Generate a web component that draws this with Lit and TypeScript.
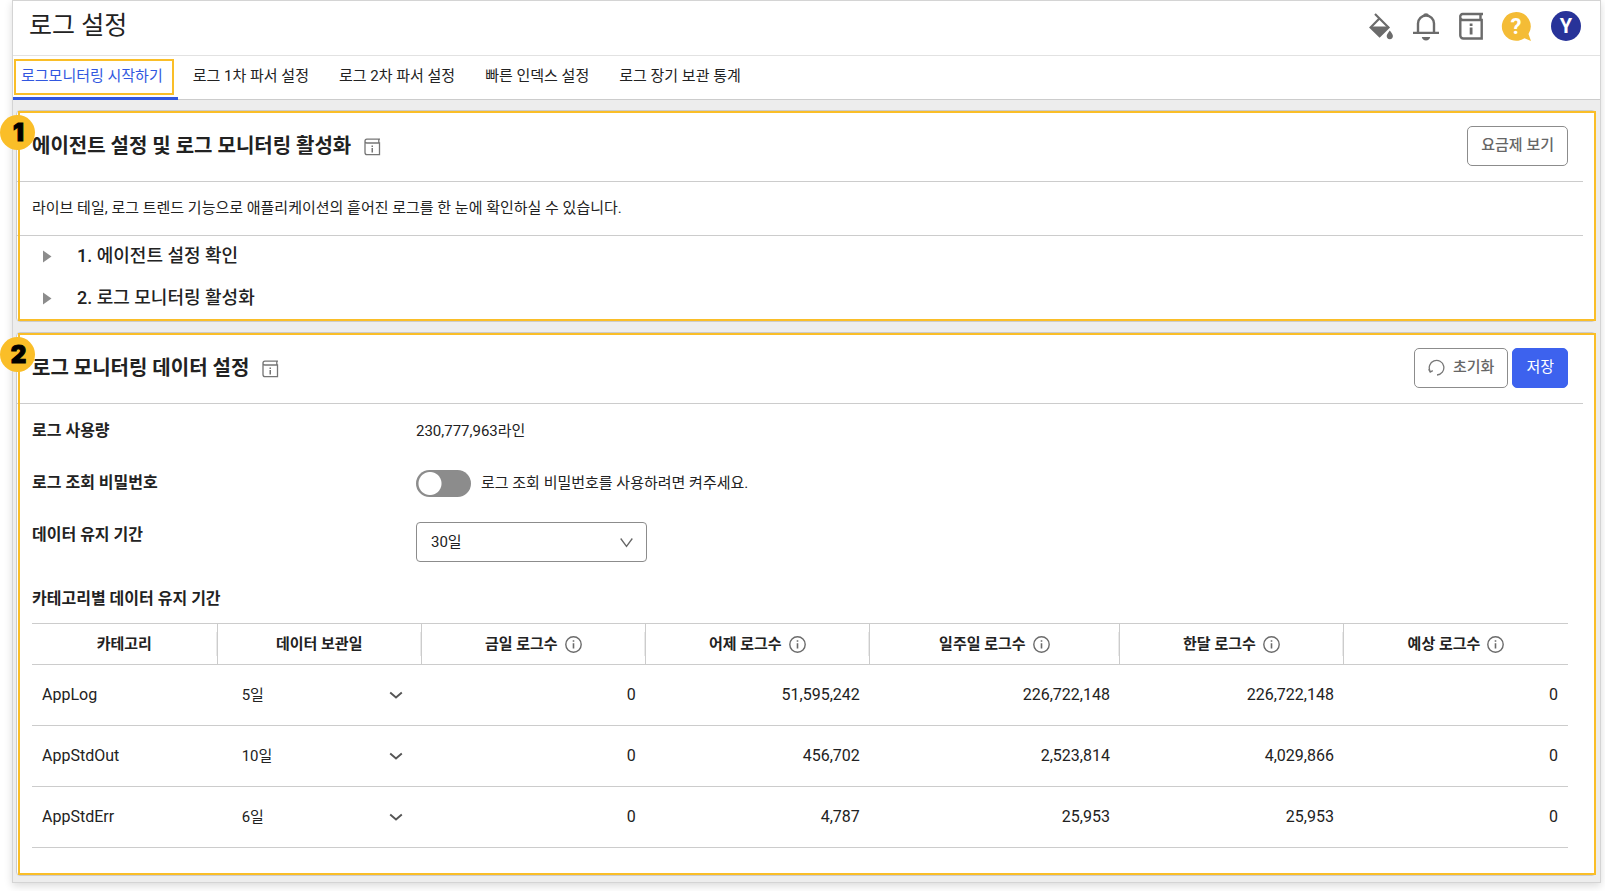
import { LitElement, html, css } from "lit";
import { customElement, state } from "lit/decorators.js";

interface CategoryRow {
  name: string;
  keep: string;
  counts: string[];
}

const TABS = [
  "로그모니터링 시작하기",
  "로그 1차 파서 설정",
  "로그 2차 파서 설정",
  "빠른 인덱스 설정",
  "로그 장기 보관 통계",
];

const COUNT_COLUMNS = ["금일 로그수", "어제 로그수", "일주일 로그수", "한달 로그수", "예상 로그수"];

const ROWS: CategoryRow[] = [
  { name: "AppLog", keep: "5일", counts: ["0", "51,595,242", "226,722,148", "226,722,148", "0"] },
  { name: "AppStdOut", keep: "10일", counts: ["0", "456,702", "2,523,814", "4,029,866", "0"] },
  { name: "AppStdErr", keep: "6일", counts: ["0", "4,787", "25,953", "25,953", "0"] },
];

const KEEP_OPTIONS = ["5일", "6일", "10일", "30일"];

@customElement("app-root")
export class AppRoot extends LitElement {
  static styles = css`
    :host {
      display: block;
      padding: 0 4px 8px 12px;
      background: #fff;
      color: #222;
      font: 400 15px/20px Roboto, "Noto Sans CJK KR", sans-serif;
    }
    * {
      box-sizing: border-box;
    }
    button,
    select,
    input {
      font: inherit;
      color: inherit;
      margin: 0;
    }
    button,
    select,
    summary,
    a {
      cursor: pointer;
    }
    svg {
      display: block;
      fill: none;
    }
    .window {
      border: 1px solid #d4d4d4;
      background: #ededed;
      box-shadow: 0 3px 8px rgba(0, 0, 0, 0.14);
    }
    .topbar {
      display: flex;
      align-items: center;
      justify-content: space-between;
      height: 55px;
      padding: 0 19px 4px 16px;
      border-bottom: 1px solid #e2e2e2;
      background: #fff;
    }
    .page-title {
      margin: 0;
      font-size: 25px;
      font-weight: 400;
      line-height: 32px;
    }
    .tools {
      display: flex;
      align-items: center;
      gap: 15px;
    }
    .tool {
      display: grid;
      place-items: center;
      width: 30px;
      height: 30px;
      padding: 0;
      border: 0;
      background: none;
      color: #6b6b6b;
    }
    .avatar {
      margin-left: 5px;
      border-radius: 50%;
      background: #283399;
      color: #fff;
      font-size: 20px;
      font-weight: 700;
    }
    .bubble-text {
      fill: #fff;
      font: 700 22px Roboto, sans-serif;
    }
    .tabs {
      display: flex;
      height: 44px;
      border-bottom: 1px solid #ccc;
      background: #fff;
    }
    .tab {
      position: relative;
      height: 44px;
      padding: 0 15px;
      color: #222;
      line-height: 41px;
      text-decoration: none;
    }
    .tab.active {
      padding-left: 8px;
      border-bottom: 3px solid #3157e0;
      color: #3157e0;
    }
    .tab.active::after {
      content: "";
      position: absolute;
      inset: 3px 4px 2px 1px;
      border: 2px solid #fabe28;
    }
    .main {
      display: flex;
      flex-direction: column;
      gap: 10px;
      padding: 10px 4px 6px 3px;
    }
    .card {
      position: relative;
      padding-right: 12px;
      border: 1px solid #ccc;
      border-radius: 4px;
      background: #fff;
    }
    .card::after {
      content: "";
      position: absolute;
      inset: 0 -1px 0 1px;
      border: 2px solid #fabe28;
      pointer-events: none;
    }
    .guide-card {
      padding-bottom: 1px;
    }
    .data-card {
      padding-bottom: 27px;
    }
    .badge {
      position: absolute;
      z-index: 1;
      top: 4px;
      left: -17px;
      width: 35px;
      height: 35px;
      padding-left: 2px;
      border-radius: 50%;
      background: #fabe28;
      color: #000;
      font: 900 24px/35px Inter, sans-serif;
      -webkit-text-stroke: 1px #000;
      text-align: center;
    }
    .card-head {
      display: flex;
      align-items: center;
      justify-content: space-between;
      height: 71px;
      padding: 0 15px;
      border-bottom: 1px solid #ccc;
    }
    .card-title {
      display: flex;
      align-items: center;
      gap: 13px;
    }
    .card-title h2 {
      margin: 0;
      font-size: 20px;
      font-weight: 700;
      line-height: 28px;
    }
    .guide {
      padding: 1px 0 0;
      border: 0;
      background: none;
      color: #757575;
    }
    .actions {
      display: flex;
      gap: 4px;
    }
    .btn {
      display: flex;
      align-items: center;
      gap: 8px;
      height: 40px;
      padding: 0 13px 2px;
      border: 1px solid #8c8c8c;
      border-radius: 5px;
      background: #fff;
      color: #666;
      font-weight: 500;
      white-space: nowrap;
    }
    .btn.primary {
      border-color: #3d62ee;
      background: #3d62ee;
      color: #fff;
      font-weight: 400;
    }
    .desc {
      margin: 0;
      padding: 0 15px;
      border-bottom: 1px solid #ccc;
      line-height: 53px;
    }
    .step summary {
      display: flex;
      align-items: center;
      gap: 25px;
      height: 42px;
      padding: 0 26px 2px;
      font-size: 18px;
      font-weight: 500;
      list-style: none;
    }
    .step svg {
      fill: #8c8c8c;
    }
    .form {
      display: grid;
      grid-template-columns: 25% 1fr;
      row-gap: 25px;
      align-items: start;
      padding: 14px 15px 0;
      line-height: 27px;
    }
    .label {
      font-size: 16px;
      font-weight: 700;
      line-height: 25px;
    }
    .toggle-line {
      display: flex;
      gap: 10px;
    }
    .toggle {
      appearance: none;
      width: 55px;
      height: 27px;
      border-radius: 14px;
      background: radial-gradient(circle at 14px 50%, #fff 11px, transparent 12px) #8c8c8c;
    }
    .toggle:checked {
      background: radial-gradient(circle at 41px 50%, #fff 11px, transparent 12px) #3d62ee;
    }
    .select-box {
      display: grid;
      align-items: center;
      width: 231px;
    }
    .select-box > * {
      grid-area: 1 / 1;
    }
    .select-box svg {
      justify-self: end;
      margin-right: 14px;
      pointer-events: none;
      stroke: #666;
    }
    .select-box select {
      appearance: none;
      width: 100%;
      height: 40px;
      padding: 0 14px;
      border: 1px solid #8c8c8c;
      border-radius: 4px;
      background: #fff;
    }
    .table-title {
      margin: 25px 15px 12px;
      font-size: 16px;
      font-weight: 700;
      line-height: 24px;
    }
    .table-wrap {
      padding: 0 15px;
    }
    table {
      width: 100%;
      border-spacing: 0;
      table-layout: fixed;
    }
    .c-name {
      width: 12.1%;
    }
    .c-keep {
      width: 13.3%;
    }
    .c-count {
      width: 14.6%;
    }
    .c-week {
      width: 16.3%;
    }
    th {
      height: 42px;
      padding: 0;
      border: solid #ccc;
      border-width: 1px 1px 1px 0;
      background: linear-gradient(#eaeaea, #eaeaea) right center / 1px 24px no-repeat;
      font-weight: 700;
    }
    th:last-child {
      border-right: 0;
      background: none;
    }
    .th-inner {
      display: flex;
      align-items: center;
      justify-content: center;
      gap: 7px;
    }
    .th-inner svg {
      stroke: #6b6b6b;
    }
    td {
      height: 61px;
      padding: 0 10px;
      border-bottom: 1px solid #ccc;
      font-size: 16px;
    }
    .num {
      text-align: right;
    }
    .select-box.plain {
      width: 100%;
      font-size: 15px;
    }
    .select-box.plain select {
      border: 0;
      background: none;
    }
    .select-box.plain svg {
      margin-right: 9px;
      stroke: #555;
    }
  `;

  @state() private usePassword = false;

  private renderGuide() {
    return html`<button class="guide" aria-label="가이드">
      <svg width="17" height="18" viewBox="0 0 17 18">
        <path
          d="M1 3v11.500A2.200 2.200 0 0 0 3.200 16.700H15.500V5H2.800A1.800 1.800 0 0 1 1 3.200 1.800 1.800 0 0 1 2.800 1.200H16M14.800 1.200V5"
          stroke="currentColor"
          stroke-width="1.300"
        />
        <path d="M7.500 7.500h1.500v1.500h-1.500zM7.500 10h1.500v4.500h-1.500z" fill="currentColor" />
      </svg>
    </button>`;
  }

  private keepOptions(selected: string) {
    return KEEP_OPTIONS.map((o) => html`<option ?selected=${o === selected}>${o}</option>`);
  }

  private renderTopbar() {
    return html`<header class="topbar">
      <h1 class="page-title">로그 설정</h1>
      <div class="tools">
        <button class="tool" aria-label="테마">
          <svg width="30" height="30" viewBox="0 0 30 30">
            <path d="M9 3 22.500 16.400 13.600 25.200 4.600 16.400 13.400 7.400" stroke="currentColor" stroke-width="2.200" />
            <path d="M4.400 15.600H23l-9.400 10.400z" fill="currentColor" />
            <path d="M23.800 19.500c2 2.800 3.100 4.200 3.100 5.600a3.100 3.100 0 0 1-6.200 0c0-1.400 1.200-2.800 3.100-5.600z" fill="currentColor" />
          </svg>
        </button>
        <button class="tool" aria-label="알림">
          <svg width="30" height="30" viewBox="0 0 30 30">
            <path d="M7 22v-9.500a8 8 0 0 1 16 0V22M2 21.900h26" stroke="currentColor" stroke-width="2.400" />
            <path d="M11.800 4.800a3.300 3.300 0 0 1 6.400 0zM10.800 26h8.400a4.300 4.300 0 0 1-8.400 0z" fill="currentColor" />
          </svg>
        </button>
        <button class="tool" aria-label="가이드">
          <svg width="30" height="30" viewBox="0 0 30 30">
            <path d="M4.300 6v18.500a3 3 0 0 0 3 3h18.400V9H6.800a2.500 2.500 0 0 1-2.500-2.900A2.500 2.500 0 0 1 6.800 3H27M24.500 3v6" stroke="currentColor" stroke-width="2.400" />
            <path d="M13.700 12.500h2.800v2.600h-2.800zM13.700 16.500h2.800v7h-2.800z" fill="currentColor" />
          </svg>
        </button>
        <button class="tool" aria-label="도움말">
          <svg width="30" height="30" viewBox="0 0 30 30">
            <path d="M15.200 1a14.400 14.400 0 1 0 8.300 26.200l6.500 2.800-2.500-7A14.400 14.400 0 0 0 15.200 1z" fill="#f4bc36" />
            <text class="bubble-text" x="15" y="23" text-anchor="middle">?</text>
          </svg>
        </button>
        <button class="tool avatar" aria-label="내 계정">Y</button>
      </div>
    </header>`;
  }

  private renderTable() {
    const info = () => html`<svg width="17" height="17" viewBox="0 0 17 17" stroke-width="1.400" aria-hidden="true">
      <circle cx="8.500" cy="8.500" r="7.700" />
      <path d="M8.500 7.200v5.400M8.500 4.200v1.600" stroke-width="1.600" />
    </svg>`;
    return html`<table aria-labelledby="category-title">
      <colgroup>
        <col class="c-name" />
        <col class="c-keep" />
        <col class="c-count" />
        <col class="c-count" />
        <col class="c-week" />
        <col class="c-count" />
        <col class="c-count" />
      </colgroup>
      <thead>
        <tr>
          <th scope="col">카테고리</th>
          <th scope="col">데이터 보관일</th>
          ${COUNT_COLUMNS.map((c) => html`<th scope="col"><div class="th-inner">${c}${info()}</div></th>`)}
        </tr>
      </thead>
      <tbody>
        ${ROWS.map(
          (r) => html`<tr>
            <td>${r.name}</td>
            <td>
              <div class="select-box plain">
                <select aria-label="${r.name} 데이터 보관일">
                  ${this.keepOptions(r.keep)}
                </select>
                <svg width="14" height="14" viewBox="0 0 14 14" stroke-width="1.900">
                  <path d="m1.200 4.500 5.800 5 5.800-5" />
                </svg>
              </div>
            </td>
            ${r.counts.map((n) => html`<td class="num">${n}</td>`)}
          </tr>`,
        )}
      </tbody>
    </table>`;
  }

  private renderStep(text: string) {
    return html`<details class="step">
      <summary>
        <svg width="9" height="13" viewBox="0 0 9 13"><path d="M0 0.500 8.500 6.500 0 12.500z" /></svg>
        ${text}
      </summary>
    </details>`;
  }

  render() {
    return html`<div class="window">
      ${this.renderTopbar()}
      <nav class="tabs">
        ${TABS.map((t, i) => html`<a class="tab ${i === 0 ? "active" : ""}" href="#">${t}</a>`)}
      </nav>
      <main class="main">
        <section class="card guide-card">
          <span class="badge">1</span>
          <div class="card-head">
            <div class="card-title">
              <h2>에이전트 설정 및 로그 모니터링 활성화</h2>
              ${this.renderGuide()}
            </div>
            <div class="actions"><button class="btn">요금제 보기</button></div>
          </div>
          <p class="desc">라이브 테일, 로그 트렌드 기능으로 애플리케이션의 흩어진 로그를 한 눈에 확인하실 수 있습니다.</p>
          ${this.renderStep("1. 에이전트 설정 확인")} ${this.renderStep("2. 로그 모니터링 활성화")}
        </section>

        <section class="card data-card">
          <span class="badge">2</span>
          <div class="card-head">
            <div class="card-title">
              <h2>로그 모니터링 데이터 설정</h2>
              ${this.renderGuide()}
            </div>
            <div class="actions">
              <button class="btn">
                <svg width="17" height="17" viewBox="0 0 17 17" stroke="#777" stroke-width="1.300">
                  <path d="M9 16a7.300 7.300 0 1 0-6.800-3.700M0.600 10.300l1.600 2.800 2.600-1.500" />
                </svg>
                초기화
              </button>
              <button class="btn primary">저장</button>
            </div>
          </div>
          <div class="form">
            <span class="label">로그 사용량</span>
            <span>230,777,963라인</span>
            <label class="label" for="use-password">로그 조회 비밀번호</label>
            <div class="toggle-line">
              <input
                id="use-password"
                class="toggle"
                type="checkbox"
                role="switch"
                .checked=${this.usePassword}
                @change=${(e: Event) => (this.usePassword = (e.target as HTMLInputElement).checked)}
              />
              <span>로그 조회 비밀번호를 사용하려면 켜주세요.</span>
            </div>
            <label class="label" for="keep-days">데이터 유지 기간</label>
            <div class="select-box">
              <select id="keep-days">
                ${this.keepOptions("30일")}
              </select>
              <svg width="13" height="13" viewBox="0 0 13 13" stroke-width="1.300">
                <path d="m0.700 2.500 5.800 8 5.800-8" />
              </svg>
            </div>
          </div>
          <h3 class="table-title" id="category-title">카테고리별 데이터 유지 기간</h3>
          <div class="table-wrap">${this.renderTable()}</div>
        </section>
      </main>
    </div>`;
  }
}
